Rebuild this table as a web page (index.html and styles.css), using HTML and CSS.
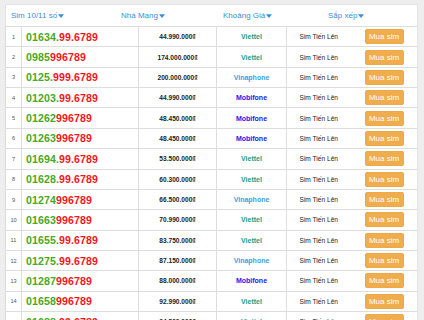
FILE: index.html
```html
<!DOCTYPE html>
<html lang="vi">
<head>
<meta charset="utf-8">
<title>Sim số đẹp</title>
<link rel="stylesheet" href="styles.css">
</head>
<body>
<div class="panel">
  <div class="filters">
    <span class="f f1">Sim 10/11 số<svg class="caret" viewBox="0 0 8 5"><path d="M0 0h8L4 5z"/></svg></span>
    <span class="f f2">Nhà Mạng <svg class="caret" viewBox="0 0 8 5"><path d="M0 0h8L4 5z"/></svg></span>
    <span class="f f3">Khoảng Giá<svg class="caret" viewBox="0 0 8 5"><path d="M0 0h8L4 5z"/></svg></span>
    <span class="f f4">Sắp xếp <svg class="caret" viewBox="0 0 8 5"><path d="M0 0h8L4 5z"/></svg></span>
  </div>
  <table class="sims">
    <colgroup>
      <col class="c-idx"><col class="c-num"><col class="c-price"><col class="c-net"><col class="c-type"><col class="c-buy">
    </colgroup>
    <tbody>
      <tr><td class="idx">1</td><td class="num"><span class="g">01634.</span><span class="r">99.6789</span></td><td class="price">44.990.000₫</td><td class="net viettel">Viettel</td><td class="type">Sim Tiến Lên</td><td class="buy"><button class="btn">Mua sim</button></td></tr>
      <tr><td class="idx">2</td><td class="num"><span class="g">0985</span><span class="r">996789</span></td><td class="price">174.000.000₫</td><td class="net viettel">Viettel</td><td class="type">Sim Tiến Lên</td><td class="buy"><button class="btn">Mua sim</button></td></tr>
      <tr><td class="idx">3</td><td class="num"><span class="g">0125.</span><span class="r">999.6789</span></td><td class="price">200.000.000₫</td><td class="net vina">Vinaphone</td><td class="type">Sim Tiến Lên</td><td class="buy"><button class="btn">Mua sim</button></td></tr>
      <tr><td class="idx">4</td><td class="num"><span class="g">01203.</span><span class="r">99.6789</span></td><td class="price">44.990.000₫</td><td class="net mobi">Mobifone</td><td class="type">Sim Tiến Lên</td><td class="buy"><button class="btn">Mua sim</button></td></tr>
      <tr><td class="idx">5</td><td class="num"><span class="g">01262</span><span class="r">996789</span></td><td class="price">48.450.000₫</td><td class="net mobi">Mobifone</td><td class="type">Sim Tiến Lên</td><td class="buy"><button class="btn">Mua sim</button></td></tr>
      <tr><td class="idx">6</td><td class="num"><span class="g">01263</span><span class="r">996789</span></td><td class="price">48.450.000₫</td><td class="net mobi">Mobifone</td><td class="type">Sim Tiến Lên</td><td class="buy"><button class="btn">Mua sim</button></td></tr>
      <tr><td class="idx">7</td><td class="num"><span class="g">01694.</span><span class="r">99.6789</span></td><td class="price">53.500.000₫</td><td class="net viettel">Viettel</td><td class="type">Sim Tiến Lên</td><td class="buy"><button class="btn">Mua sim</button></td></tr>
      <tr><td class="idx">8</td><td class="num"><span class="g">01628.</span><span class="r">99.6789</span></td><td class="price">60.300.000₫</td><td class="net viettel">Viettel</td><td class="type">Sim Tiến Lên</td><td class="buy"><button class="btn">Mua sim</button></td></tr>
      <tr><td class="idx">9</td><td class="num"><span class="g">01274</span><span class="r">996789</span></td><td class="price">66.500.000₫</td><td class="net vina">Vinaphone</td><td class="type">Sim Tiến Lên</td><td class="buy"><button class="btn">Mua sim</button></td></tr>
      <tr><td class="idx">10</td><td class="num"><span class="g">01663</span><span class="r">996789</span></td><td class="price">70.990.000₫</td><td class="net viettel">Viettel</td><td class="type">Sim Tiến Lên</td><td class="buy"><button class="btn">Mua sim</button></td></tr>
      <tr><td class="idx">11</td><td class="num"><span class="g">01655.</span><span class="r">99.6789</span></td><td class="price">83.750.000₫</td><td class="net viettel">Viettel</td><td class="type">Sim Tiến Lên</td><td class="buy"><button class="btn">Mua sim</button></td></tr>
      <tr><td class="idx">12</td><td class="num"><span class="g">01275.</span><span class="r">99.6789</span></td><td class="price">87.150.000₫</td><td class="net vina">Vinaphone</td><td class="type">Sim Tiến Lên</td><td class="buy"><button class="btn">Mua sim</button></td></tr>
      <tr><td class="idx">13</td><td class="num"><span class="g">01287</span><span class="r">996789</span></td><td class="price">88.000.000₫</td><td class="net mobi">Mobifone</td><td class="type">Sim Tiến Lên</td><td class="buy"><button class="btn">Mua sim</button></td></tr>
      <tr><td class="idx">14</td><td class="num"><span class="g">01658</span><span class="r">996789</span></td><td class="price">92.990.000₫</td><td class="net viettel">Viettel</td><td class="type">Sim Tiến Lên</td><td class="buy"><button class="btn">Mua sim</button></td></tr>
      <tr><td class="idx">15</td><td class="num"><span class="g">01688.</span><span class="r">99.6789</span></td><td class="price">94.500.000₫</td><td class="net viettel">Viettel</td><td class="type">Sim Tiến Lên</td><td class="buy"><button class="btn">Mua sim</button></td></tr>
    </tbody>
  </table>
</div>
</body>
</html>
```

FILE: styles.css
```css
html, body {
  margin: 0;
  padding: 0;
  background: #eeeeee;
  font-family: "Liberation Sans", Arial, sans-serif;
  color: #333;
}
body {
  padding: 4px 6px 0 5px;
  overflow: hidden;
  height: 320px;
  box-sizing: border-box;
}
.panel {
  background: #fff;
  border: 1px solid #e4e4e4;
  border-bottom: none;
}
.filters {
  display: grid;
  grid-template-columns: 110px 102px 105px 1fr;
  height: 21px;
  align-items: center;
  padding-left: 5px;
  font-size: 8px;
  color: #3b8fd6;
}
.f {
  white-space: nowrap;
  display: flex;
  align-items: center;
}
.caret {
  width: 6px;
  height: 4px;
  margin-left: 1px;
  fill: #3b8fd6;
}
.sims {
  border-collapse: collapse;
  table-layout: fixed;
  margin-left: -1px;
  width: calc(100% + 1px);
}
.c-idx { width: 16px; }
.c-num { width: 117px; }
.c-price { width: 78px; }
.c-net { width: 70px; }
.c-type { width: 64px; }
.c-buy { width: auto; }
.sims tr { height: 20.36px; }
.sims td {
  border-top: 1px solid #dddddd;
  border-bottom: 1px solid #dddddd;
  padding: 0;
  vertical-align: middle;
  text-align: center;
  white-space: nowrap;
  overflow: hidden;
}
.sims td.idx, .sims td.num, .sims td.price, .sims td.net {
  border-left: 1px solid #dddddd;
  border-right: 1px solid #dddddd;
}
.idx {
  font-size: 5.6px;
  color: #555;
}
.sims td.num {
  text-align: left;
  padding-left: 4px;
  font-size: 10.6px;
  font-weight: bold;
  letter-spacing: 0.1px;
}
.g { color: #4aa823; }
.r { color: #f5161b; }
.price {
  font-size: 6.6px;
  font-weight: bold;
  color: #222;
}
.net {
  font-size: 7px;
  font-weight: bold;
}
.viettel { color: #14a08c; }
.vina { color: #3aa0e8; }
.mobi { color: #2020ee; }
.type {
  font-size: 6.6px;
  color: #222;
}
.sims td.buy {
  text-align: left;
  padding-left: 14px;
}
.btn {
  font-family: "Liberation Sans", Arial, sans-serif;
  font-size: 8px;
  color: #fff;
  background: #f0ad4e;
  border: 1px solid #eea847;
  border-radius: 2px;
  width: 39px;
  height: 15px;
  padding: 0;
  display: block;
}
```
